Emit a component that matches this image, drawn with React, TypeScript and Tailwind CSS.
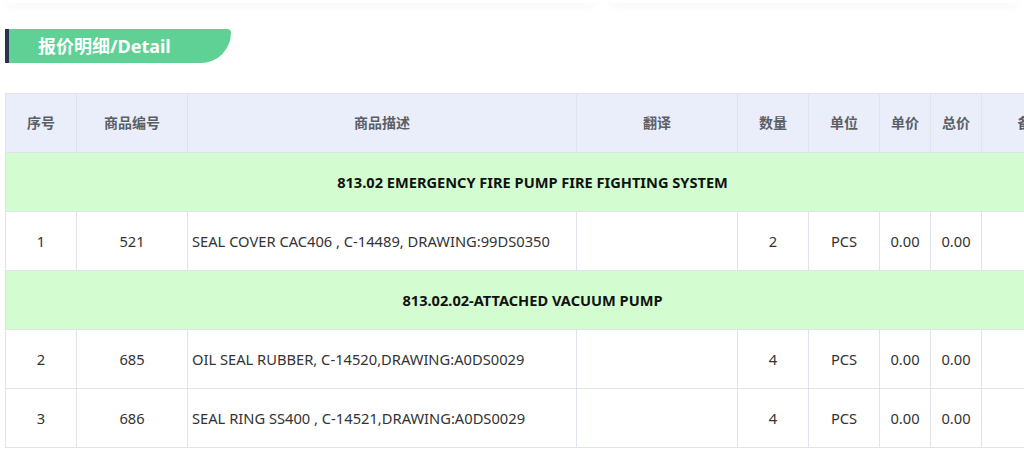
import React from 'react';

type Row =
  | { kind: 'group'; title: string }
  | { kind: 'item'; no: number; code: string; desc: string; qty: number; unit: string; price: string; total: string };

const rows: Row[] = [
  { kind: 'group', title: '813.02 EMERGENCY FIRE PUMP FIRE FIGHTING SYSTEM' },
  { kind: 'item', no: 1, code: '521', desc: 'SEAL COVER CAC406 , C-14489, DRAWING:99DS0350', qty: 2, unit: 'PCS', price: '0.00', total: '0.00' },
  { kind: 'group', title: '813.02.02-ATTACHED VACUUM PUMP' },
  { kind: 'item', no: 2, code: '685', desc: 'OIL SEAL RUBBER, C-14520,DRAWING:A0DS0029', qty: 4, unit: 'PCS', price: '0.00', total: '0.00' },
  { kind: 'item', no: 3, code: '686', desc: 'SEAL RING SS400 , C-14521,DRAWING:A0DS0029', qty: 4, unit: 'PCS', price: '0.00', total: '0.00' },
];

const headers = ['序号', '商品编号', '商品描述', '翻译', '数量', '单位', '单价', '总价', '备注'];
const widths = [71, 111, 389, 161, 71, 71, 51, 51, 100];

export default function App() {
  return (
    <div
      className="w-[1024px] h-[474px] overflow-hidden bg-white"
      style={{ fontFamily: '"Noto Sans", "Noto Sans CJK SC", sans-serif' }}
    >
      <div className="flex gap-[14px] px-[5px]">
        <div className="w-[591px] h-[3px] bg-white rounded-b-md shadow-[0_2px_10px_rgba(0,0,0,0.08)]" />
        <div className="flex-1 h-[3px] bg-white rounded-b-md shadow-[0_2px_10px_rgba(0,0,0,0.08)]" />
      </div>

      <div className="mt-[26px] ml-[5px] flex h-[34px]">
        <div className="w-[4px] bg-[#2a3250]" />
        <div className="w-[222px] bg-[#5fd195] rounded-br-[32px] rounded-tr-[4px] flex items-center pl-[29px]">
          <span className="text-white font-bold text-[18px]">报价明细/Detail</span>
        </div>
      </div>

      <div className="mt-[30px] ml-[5px]">
        <table className="table-fixed border-collapse w-[1076px] text-[14.7px] leading-[20px]">
          <colgroup>
            {widths.map((w, i) => (
              <col key={i} style={{ width: w }} />
            ))}
          </colgroup>
          <thead>
            <tr className="h-[59px] bg-[#eaeefb]">
              {headers.map((h) => (
                <th key={h} className="border border-[#dfe3ec] text-[14px] font-bold text-[#5a5e66] text-center pb-[1px]">
                  {h}
                </th>
              ))}
            </tr>
          </thead>
          <tbody>
            {rows.map((r, i) =>
              r.kind === 'group' ? (
                <tr key={i} className="h-[59px] bg-[#d3fdd0]">
                  <td colSpan={9} className="border border-[#dfe3ec] text-center font-bold text-[14.6px] text-[#111] pr-[22px] pb-[1px]">
                    {r.title}
                  </td>
                </tr>
              ) : (
                <tr key={i} className="h-[59px] text-[#333]">
                  <td className="border border-[#dfe3ec] text-center pb-[1px]">{r.no}</td>
                  <td className="border border-[#dfe3ec] text-center pb-[1px]">{r.code}</td>
                  <td className="border border-[#dfe3ec] px-[4px] whitespace-nowrap pb-[1px]">{r.desc}</td>
                  <td className="border border-[#dfe3ec]"></td>
                  <td className="border border-[#dfe3ec] text-center pb-[1px]">{r.qty}</td>
                  <td className="border border-[#dfe3ec] text-center pb-[1px]">{r.unit}</td>
                  <td className="border border-[#dfe3ec] text-center pb-[1px]">{r.price}</td>
                  <td className="border border-[#dfe3ec] text-center pb-[1px]">{r.total}</td>
                  <td className="border border-[#dfe3ec]"></td>
                </tr>
              )
            )}
          </tbody>
        </table>
      </div>
    </div>
  );
}
